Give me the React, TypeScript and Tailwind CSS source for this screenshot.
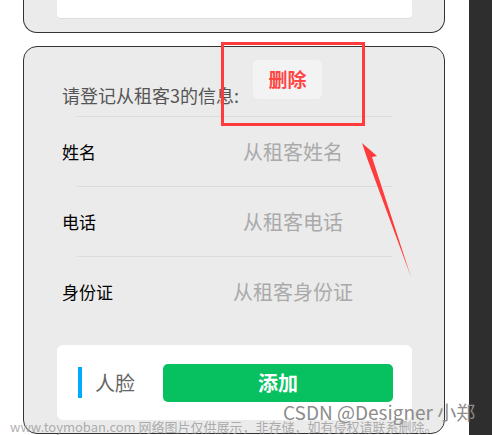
import React from "react";

const font = { fontFamily: '"Noto Sans CJK SC", "Noto Sans", sans-serif' };

function Field({ label, placeholder }: { label: string; placeholder: string }) {
  return (
    <div className="flex h-[69px] items-center pl-[38px]">
      <span className="w-[131px] text-[17px] text-black">{label}</span>
      <input
        className="w-[200px] bg-transparent text-center text-[20px] text-[#333] outline-none placeholder:text-[#aaaaaa]"
        placeholder={placeholder}
        readOnly
      />
    </div>
  );
}

function Divider() {
  return <div className="ml-[53px] mr-[52px] h-px bg-[#dcdcdc]" />;
}

export default function App() {
  return (
    <div className="relative flex h-[435px] w-[492px] overflow-hidden bg-white" style={font}>
      <div className="flex w-[469px] flex-col pl-[23px] pr-[24px]">
        {/* previous tenant card, cut off at the top */}
        <div className="h-[33px] rounded-b-[14px] border-x border-b border-[#333] bg-[#ebebeb] pl-[33px] pr-[32px]">
          <div className="h-[19px] rounded-b-[4px] border-b border-[#dddddd] bg-white" />
        </div>

        <div className="mt-[13px] h-[388px] rounded-[14px] border border-[#333] bg-[#ebebeb]">
          <div className="flex h-[69px] items-start pl-[38px] pt-[13px]">
            <span className="mt-[23px] text-[18px] leading-6 text-[#555]">请登记从租客3的信息:</span>
            <button
              type="button"
              className="ml-[14px] flex h-[39px] w-[69px] items-center justify-center rounded-[5px] bg-[#f3f3f3] text-[19px] font-bold text-[#ff4545]"
            >
              删除
            </button>
          </div>
          <Divider />
          <Field label="姓名" placeholder="从租客姓名" />
          <Divider />
          <Field label="电话" placeholder="从租客电话" />
          <Divider />
          <Field label="身份证" placeholder="从租客身份证" />

          <div className="ml-[33px] mt-[19px] flex h-[75px] w-[355px] items-center rounded-[6px] bg-white pl-[21px]">
            <span className="h-[31px] w-[4px] bg-[#00aaff]" />
            <span className="ml-[13px] w-[68px] text-[20px] text-[#666]">人脸</span>
            <button
              type="button"
              className="flex h-[38px] w-[230px] items-center justify-center rounded-[5px] bg-[#07c160] text-[20px] font-bold text-white"
            >
              添加
            </button>
          </div>
        </div>
      </div>
      <div className="w-[23px] bg-[#2e2e2e]" />

      {/* annotation */}
      <div className="absolute left-[221px] top-[42px] h-[84px] w-[144px] border-[3px] border-[#ff3b3b]" />
      <svg className="absolute left-0 top-0" width="492" height="435" viewBox="0 0 492 435">
        <polygon points="411,277 367,158 362,143 377,156 372,157" fill="#ff3b3b" />
      </svg>

      {/* watermarks */}
      <div className="absolute left-[283px] top-[400px] text-[19px] leading-6 text-[#8c8c8c]">CSDN @Designer 小郑</div>
      <div className="absolute left-[10px] top-[419px] whitespace-nowrap text-[13px] leading-4 text-[#9a9a9a]/80">
        www.toymoban.com 网络图片仅供展示，非存储，如有侵权请联系删除。
      </div>
    </div>
  );
}
